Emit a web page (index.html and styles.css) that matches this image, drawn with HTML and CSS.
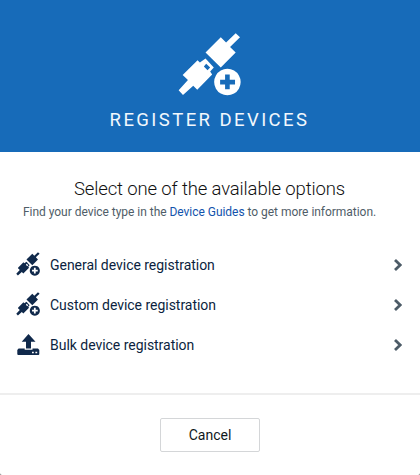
FILE: index.html
```html
<!DOCTYPE html>
<html lang="en">
<head>
<meta charset="utf-8">
<title>Register devices</title>
<link rel="stylesheet" href="styles.css">
</head>
<body>
<svg class="defs" aria-hidden="true">
  <symbol id="plug" viewBox="24 26 190 190">
    <path fill-rule="evenodd" d="M107 85L153 39L169 55L198 27L211 39L181 68L198 85L153 130ZM38 153L83 108L90 115L107 103L132 130L121 142L127 151L82 197L70 185L39 213L26 199L54 168ZM109 119L102 127L113 138L121 130Z"/>
    <path fill-rule="evenodd" d="M173 134a40 40 0 1 0 .01 0ZM166 151H180V167H196V181H180V196H166V181H151V167H166Z"/>
  </symbol>
  <symbol id="upload" viewBox="0 -1 24 24">
    <path fill-rule="evenodd" d="M12.5 1L19.5 8.8H15V15.5H10V8.8H5.7ZM2.6 15.5H8.7V16.7H16.5V15.5H22L23.3 17V21Q23.3 22 22.3 22H2.3Q1.3 22 1.3 21V17ZM16 18.7V20.3H17.8V18.7ZM19.4 18.7V20.3H21.2V18.7Z"/>
  </symbol>
</svg>
<main class="dialog">
  <header class="header">
    <svg class="header-icon"><use href="#plug"/></svg>
    <h1 class="title">REGISTER DEVICES</h1>
  </header>
  <section class="content">
    <h2 class="heading">Select one of the available options</h2>
    <p class="hint">Find your device type in the <a class="link">Device Guides</a> to get more information.</p>
    <ul class="options">
      <li class="option"><svg class="icon"><use href="#plug"/></svg><span>General device registration</span><svg class="chevron" viewBox="0 0 10 14"><path d="M2 2L7.2 7L2 12"/></svg></li>
      <li class="option"><svg class="icon"><use href="#plug"/></svg><span>Custom device registration</span><svg class="chevron" viewBox="0 0 10 14"><path d="M2 2L7.2 7L2 12"/></svg></li>
      <li class="option"><svg class="icon"><use href="#upload"/></svg><span>Bulk device registration</span><svg class="chevron" viewBox="0 0 10 14"><path d="M2 2L7.2 7L2 12"/></svg></li>
    </ul>
  </section>
  <footer class="footer"><button class="cancel">Cancel</button></footer>
</main>
</body>
</html>
```
FILE: styles.css
```css
* { box-sizing: border-box; }
body { margin: 0; background: #777; font-family: Roboto, "Liberation Sans", sans-serif; }
.defs { display: none; }
.dialog { display: flex; flex-direction: column; height: 475px; background: #fff; border-radius: 0 0 2px 2px; overflow: hidden; }
.header { height: 152px; padding-top: 33px; background: #176bb9; display: flex; flex-direction: column; align-items: center; }
.header-icon { width: 63px; height: 63px; margin-right: 1px; fill: #fff; flex: none; }
.title { margin: 12px 1px 0 0; color: #f2f8fd; font-size: 18.5px; line-height: 24px; font-weight: 400; letter-spacing: 2.42px; white-space: nowrap; }
.content { height: 241px; padding-top: 25px; }
.heading { margin: 0 1px 0 0; text-align: center; font-size: 18.5px; line-height: 25px; font-weight: 300; letter-spacing: -0.14px; color: #111; white-space: nowrap; }
.hint { margin: 2px 0 0 23px; font-size: 12px; line-height: 16px; letter-spacing: -0.035px; color: #4f5d68; white-space: nowrap; }
.link { color: #1253ac; }
.options { list-style: none; margin: 25px 0 0; padding: 0 17px 0 16px; }
.option { height: 40px; display: flex; align-items: center; font-size: 14px; letter-spacing: -0.03px; color: #0c1f40; }
.icon { width: 24px; height: 24px; fill: #10294b; margin: 0 10px 2px 0; }
.chevron { width: 10px; height: 14px; margin: 0 0 1px auto; fill: none; stroke: #4c5b67; stroke-width: 2.8; }
.footer { flex: 1; border-top: 2px solid #eee; display: flex; justify-content: center; align-items: flex-start; padding-top: 23px; }
.cancel { width: 100px; height: 34px; border: 1px solid #d4d6d8; border-radius: 2px; background: #fff; font: 14px Roboto, sans-serif; color: #10181c; padding: 0; }
```
